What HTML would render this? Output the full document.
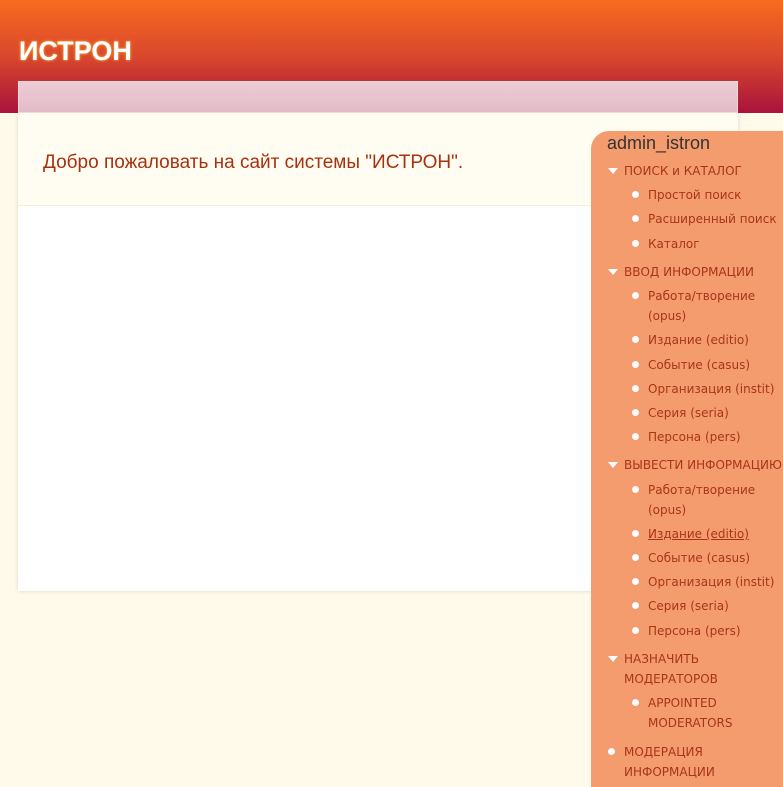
<!DOCTYPE html>
<html><head><meta charset="utf-8"><style>
body{margin:0;width:783px;height:787px;overflow:hidden;background:#fffaea;font-family:"Liberation Sans",sans-serif;position:relative}
.hdr{position:absolute;left:0;top:0;width:783px;height:113px;background:linear-gradient(#f86b1f,#d9472c 50%,#a8143d)}
.logo{position:absolute;left:19px;top:36px;font:bold 27px "Liberation Sans",sans-serif;color:#fff;text-shadow:0 0 3px #f0b040,0 0 1px #f0b040}
.bar{position:absolute;left:18px;top:81px;width:720px;height:32px;background:linear-gradient(#ecccd4,#e3bcc8);border:1px solid #f0d8dc;box-sizing:border-box}
.main{position:absolute;left:18px;top:113px;width:720px;height:478px;background:#fff;box-shadow:0 0 4px rgba(0,0,0,.15)}
.top{height:92px;background:#fffdf2;border-bottom:1px solid #f5efd8}
.welcome{position:absolute;left:25px;top:39px;font-size:19px;color:#a8300f}
.side{position:absolute;left:591px;top:131px;width:192px;height:656px;background:#f59c6f;border-top-left-radius:18px;font-family:"DejaVu Sans",sans-serif;font-size:12px;color:#a8351a}
.side h2{margin:0;position:absolute;left:16px;top:2px;font-size:18px;font-weight:normal;color:#333;font-family:"Liberation Sans",sans-serif}
.it{position:absolute;white-space:nowrap;line-height:20px}
.tri{position:absolute;left:-16px;top:7px;width:0;height:0;border-left:5px solid transparent;border-right:5px solid transparent;border-top:6px solid #fff}
.dot{position:absolute;left:-16px;top:6px;width:7px;height:7px;border-radius:50%;background:#fff;box-shadow:0 0 1px #c88}
</style></head><body>
<div class="hdr"></div>
<div class="logo">ИСТРОН</div>
<div class="main"><div class="top"></div><div class="welcome">Добро пожаловать на сайт системы "ИСТРОН".</div></div>
<div class="bar"></div>
<div class="side"><h2>admin_istron</h2>
<div class="it" style="left:33px;top:30px"><span class="tri"></span>ПОИСК и КАТАЛОГ</div>
<div class="it" style="left:57px;top:54px"><span class="dot"></span>Простой поиск</div>
<div class="it" style="left:57px;top:78px"><span class="dot"></span>Расширенный поиск</div>
<div class="it" style="left:57px;top:103px"><span class="dot"></span>Каталог</div>
<div class="it" style="left:33px;top:131px"><span class="tri"></span>ВВОД ИНФОРМАЦИИ</div>
<div class="it" style="left:57px;top:155px"><span class="dot"></span>Работа/творение<br>(opus)</div>
<div class="it" style="left:57px;top:199px"><span class="dot"></span>Издание (editio)</div>
<div class="it" style="left:57px;top:224px"><span class="dot"></span>Событие (casus)</div>
<div class="it" style="left:57px;top:248px"><span class="dot"></span>Организация (instit)</div>
<div class="it" style="left:57px;top:272px"><span class="dot"></span>Серия (seria)</div>
<div class="it" style="left:57px;top:296px"><span class="dot"></span>Персона (pers)</div>
<div class="it" style="left:33px;top:324px"><span class="tri"></span>ВЫВЕСТИ ИНФОРМАЦИЮ</div>
<div class="it" style="left:57px;top:349px"><span class="dot"></span>Работа/творение<br>(opus)</div>
<div class="it" style="left:57px;top:393px;text-decoration:underline"><span class="dot"></span>Издание (editio)</div>
<div class="it" style="left:57px;top:417px"><span class="dot"></span>Событие (casus)</div>
<div class="it" style="left:57px;top:441px"><span class="dot"></span>Организация (instit)</div>
<div class="it" style="left:57px;top:465px"><span class="dot"></span>Серия (seria)</div>
<div class="it" style="left:57px;top:490px"><span class="dot"></span>Персона (pers)</div>
<div class="it" style="left:33px;top:518px"><span class="tri"></span>НАЗНАЧИТЬ<br>МОДЕРАТОРОВ</div>
<div class="it" style="left:57px;top:562px"><span class="dot"></span>APPOINTED<br>MODERATORS</div>
<div class="it" style="left:33px;top:611px"><span class="dot"></span>МОДЕРАЦИЯ<br>ИНФОРМАЦИИ</div>
</div>
</body></html>
